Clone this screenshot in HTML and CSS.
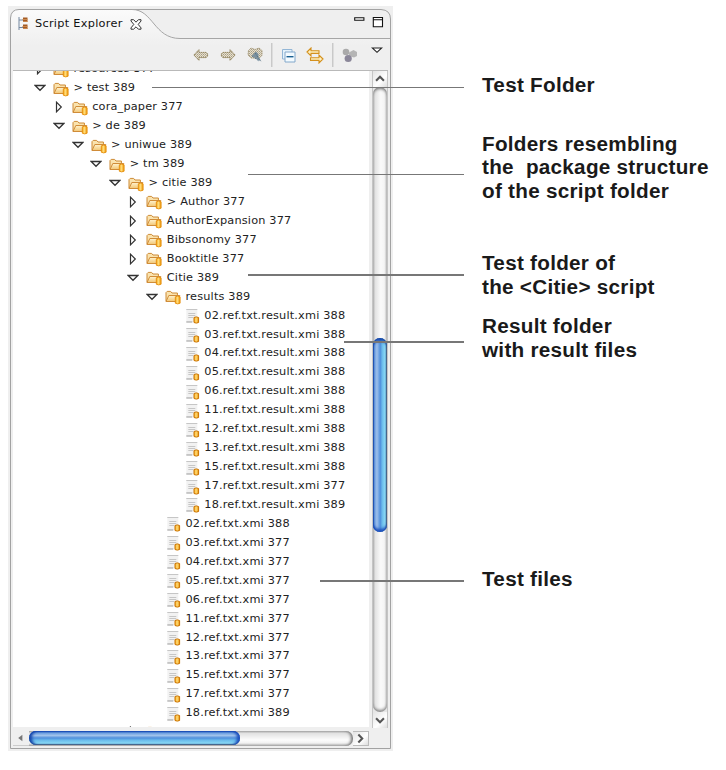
FILE: index.html
```html
<!DOCTYPE html>
<html lang="en">
<head>
<meta charset="utf-8">
<title>Script Explorer</title>
<link rel="stylesheet" href="styles.css">
</head>
<body>
<svg width="0" height="0" class="defs">
  <defs>
    <linearGradient id="fold" x1="0" y1="0" x2="0" y2="1"><stop offset="0" stop-color="#fff3cf"/><stop offset="1" stop-color="#f2c674"/></linearGradient>
    <linearGradient id="can" x1="0" y1="0" x2="1" y2="0"><stop offset="0" stop-color="#f6a81c"/><stop offset=".45" stop-color="#ffdc78"/><stop offset="1" stop-color="#ed9508"/></linearGradient>
    <linearGradient id="tabfill" x1="0" y1="0" x2="0" y2="1"><stop offset="0" stop-color="#fbfbfb"/><stop offset=".6" stop-color="#efefef"/></linearGradient>
    <pattern id="dots" width="2" height="2" patternUnits="userSpaceOnUse"><rect width="2" height="2" fill="#e6e0d0"/><rect width="1" height="1" fill="#a99e84"/><rect x="1" y="1" width="1" height="1" fill="#bdb49c"/></pattern>
  </defs>
  <symbol id="folder" viewBox="0 0 16 16">
    <path d="M1 12.300V3.600L2.200 2.400H5.600L7 4h5.400v2.600" fill="#fae3ae" stroke="#cd8a35"/>
    <path d="M1 12.500 3.800 6.500H14.800L12.300 12.500Z" fill="url(#fold)" stroke="#d08c38"/>
    <path d="M10.300 7.800q2.400-1.200 4.800 0v6.400q-2.400 1.400-4.800 0Z" fill="url(#can)" stroke="#e58e0c" stroke-width=".9"/>
  </symbol>
  <symbol id="file" viewBox="0 0 16 16">
    <path d="M1 1h11v13H1z" fill="#f2f2f2"/>
    <path d="M1 1.500h11M3 5.500h7M3 7.500h7M3 9.500h5" stroke="#c6c6c6" fill="none"/>
    <path d="M1 14h6" stroke="#999"/>
    <path d="M8.700 9.500q2.200-1.200 4.600 0v5q-2.300 1.200-4.600 0Z" fill="url(#can)" stroke="#c97300"/>
  </symbol>
  <symbol id="open" viewBox="0 0 12 12"><path d="M1.200 3.500H10.800L6 8.300Z" fill="#fff" stroke="#333" stroke-width="1.300"/></symbol>
  <symbol id="shut" viewBox="0 0 12 12"><path d="M3.500 1.200V10.800L8.300 6Z" fill="#fff" stroke="#333" stroke-width="1.200"/></symbol>
  <symbol id="arrow" viewBox="0 0 16 14"><path d="M.9 7 6 1.600V4.400h7l1.600 1.300v2.600L13 9.600H6v2.800Z" fill="url(#dots)" stroke="#93855f" stroke-dasharray="1.600 .4"/></symbol>
</svg>

<main class="figure">
  <section class="window">
    <header class="head">
      <svg class="frame" width="385" height="745" viewBox="8 6 385 745">
        <path d="M10.500 70V18Q11 9.500 19 9.500H132C153 9.500 154 38.500 180 38.500H390V70Z" fill="url(#tabfill)"/>
        <path d="M132 9.500H381Q390 10 390 19V38.500H180C154 38.500 153 9.500 132 9.500Z" fill="#efefef"/>
        <path d="M10.500 748.500V18Q11 9.500 19 9.500H381Q390.500 10 390.500 19V748.500Z" fill="none" stroke="#a2a2a2"/>
        <path d="M132 9.500C153 9.500 154 38.500 180 38.500H390" fill="none" stroke="#a6a6a6"/>
      </svg>
      <div class="tabbar">
        <svg width="11" height="14" viewBox="0 0 11 14"><path d="M1 0v13M1 3h4M1 10.500h4" stroke="#7488a0" fill="none"/><path d="M5 .5h4.500v4.500H5zM5 7.500h4.500v4.500H5z" fill="#a55b23"/><path d="M4 2.500h6M4 9.500h6M5 4.500h5M5 11.500h5" stroke="#d99c63" stroke-width=".7"/></svg>
        <span class="title">Script Explorer</span>
        <svg class="close" width="12" height="11" viewBox="0 0 12 11"><path d="M1 .7H3.600L6 3.200 8.400 .7H11V2L8.200 5.400 11 8.900v1.300H8.400L6 7.800 3.600 10.200H1V8.900L3.800 5.400 1 2Z" fill="#fff" stroke="#333"/></svg>
        <svg class="winbtns" width="30" height="14" viewBox="0 0 30 14"><path d="M.7 1.700h9.200v2.600H.7z" fill="#fff" stroke="#111" stroke-width="1.100"/><path d="M19.300 1.500h9.200v9.200H19.300zM19.300 3.800h9.200" fill="#fff" stroke="#111" stroke-width="1.100"/></svg>
      </div>
      <div class="toolbar">
        <svg class="t-back" width="16" height="14"><use href="#arrow"/></svg>
        <svg class="t-next" width="16" height="14"><use href="#arrow"/></svg>
        <svg class="t-up" width="16" height="16" viewBox="0 0 16 16"><path d="M1.500 3.500 4 1l4 1.500L12 1l3 2.500v5L12 11H4L1 8Z" fill="url(#dots)" stroke="#a69a7c" stroke-dasharray="1.400 .6"/><path d="M4.500 9 9 4.500 11.500 7v3l3 4.500L10 12.500 7 10Z" fill="#7d919e"/><path d="M5 9l7 5M8 6l5 7" stroke="#456b82" stroke-dasharray="1 1"/></svg>
        <i class="sep"></i>
        <svg class="t-collapse" width="15" height="15" viewBox="0 0 15 15"><path d="M1.500 1.500h9.500v9.500H1.500z" fill="#e5f2fb" stroke="#93b6d6"/><path d="M4 4h10v10H4z" fill="#f4fbff" stroke="#83a8cb"/><path d="M5.500 8.700h7" stroke="#195f91" stroke-width="1.400"/></svg>
        <svg class="t-link" width="18" height="17" viewBox="0 0 18 17"><path d="M1 5 5 1V3.700H13V6.400H5V9Z" fill="#fff1bf" stroke="#d4901c" stroke-width="1.100"/><path d="M17 12 13 8v2.700H4.500v2.700H13V16Z" fill="#fff1bf" stroke="#d4901c" stroke-width="1.100"/></svg>
        <i class="sep"></i>
        <svg class="t-task" width="16" height="15" viewBox="0 0 16 15"><circle cx="4" cy="4" r="3.300" fill="#aaa"/><path d="M7 4.500 11.500 2 15 4v4l-3 1.500L7 8Z" fill="#b5b5b5"/><circle cx="6.200" cy="10.500" r="3.600" fill="#8b8799"/></svg>
        <svg class="t-menu" width="12" height="7" viewBox="0 0 12 7"><path d="M1.300 1H10.700L6 5.300Z" fill="#fff" stroke="#222" stroke-width="1.100"/></svg>
      </div>
    </header>
    <div class="body">
      <div class="tree">
        <div class="row l0"><svg><use href="#shut"/></svg><svg class="ic"><use href="#folder"/></svg>resources 377</div>
        <div class="row l0"><svg><use href="#open"/></svg><svg class="ic"><use href="#folder"/></svg>&gt; test 389</div>
        <div class="row l1"><svg><use href="#shut"/></svg><svg class="ic"><use href="#folder"/></svg>cora_paper 377</div>
        <div class="row l1"><svg><use href="#open"/></svg><svg class="ic"><use href="#folder"/></svg>&gt; de 389</div>
        <div class="row l2"><svg><use href="#open"/></svg><svg class="ic"><use href="#folder"/></svg>&gt; uniwue 389</div>
        <div class="row l3"><svg><use href="#open"/></svg><svg class="ic"><use href="#folder"/></svg>&gt; tm 389</div>
        <div class="row l4"><svg><use href="#open"/></svg><svg class="ic"><use href="#folder"/></svg>&gt; citie 389</div>
        <div class="row l5"><svg><use href="#shut"/></svg><svg class="ic"><use href="#folder"/></svg>&gt; Author 377</div>
        <div class="row l5"><svg><use href="#shut"/></svg><svg class="ic"><use href="#folder"/></svg>AuthorExpansion 377</div>
        <div class="row l5"><svg><use href="#shut"/></svg><svg class="ic"><use href="#folder"/></svg>Bibsonomy 377</div>
        <div class="row l5"><svg><use href="#shut"/></svg><svg class="ic"><use href="#folder"/></svg>Booktitle 377</div>
        <div class="row l5"><svg><use href="#open"/></svg><svg class="ic"><use href="#folder"/></svg>Citie 389</div>
        <div class="row l6"><svg><use href="#open"/></svg><svg class="ic"><use href="#folder"/></svg>results 389</div>
        <div class="row l7"><svg></svg><svg class="ic"><use href="#file"/></svg>02.ref.txt.result.xmi 388</div>
        <div class="row l7"><svg></svg><svg class="ic"><use href="#file"/></svg>03.ref.txt.result.xmi 388</div>
        <div class="row l7"><svg></svg><svg class="ic"><use href="#file"/></svg>04.ref.txt.result.xmi 388</div>
        <div class="row l7"><svg></svg><svg class="ic"><use href="#file"/></svg>05.ref.txt.result.xmi 388</div>
        <div class="row l7"><svg></svg><svg class="ic"><use href="#file"/></svg>06.ref.txt.result.xmi 388</div>
        <div class="row l7"><svg></svg><svg class="ic"><use href="#file"/></svg>11.ref.txt.result.xmi 388</div>
        <div class="row l7"><svg></svg><svg class="ic"><use href="#file"/></svg>12.ref.txt.result.xmi 388</div>
        <div class="row l7"><svg></svg><svg class="ic"><use href="#file"/></svg>13.ref.txt.result.xmi 388</div>
        <div class="row l7"><svg></svg><svg class="ic"><use href="#file"/></svg>15.ref.txt.result.xmi 388</div>
        <div class="row l7"><svg></svg><svg class="ic"><use href="#file"/></svg>17.ref.txt.result.xmi 377</div>
        <div class="row l7"><svg></svg><svg class="ic"><use href="#file"/></svg>18.ref.txt.result.xmi 389</div>
        <div class="row l6"><svg></svg><svg class="ic"><use href="#file"/></svg>02.ref.txt.xmi 388</div>
        <div class="row l6"><svg></svg><svg class="ic"><use href="#file"/></svg>03.ref.txt.xmi 377</div>
        <div class="row l6"><svg></svg><svg class="ic"><use href="#file"/></svg>04.ref.txt.xmi 377</div>
        <div class="row l6"><svg></svg><svg class="ic"><use href="#file"/></svg>05.ref.txt.xmi 377</div>
        <div class="row l6"><svg></svg><svg class="ic"><use href="#file"/></svg>06.ref.txt.xmi 377</div>
        <div class="row l6"><svg></svg><svg class="ic"><use href="#file"/></svg>11.ref.txt.xmi 377</div>
        <div class="row l6"><svg></svg><svg class="ic"><use href="#file"/></svg>12.ref.txt.xmi 377</div>
        <div class="row l6"><svg></svg><svg class="ic"><use href="#file"/></svg>13.ref.txt.xmi 377</div>
        <div class="row l6"><svg></svg><svg class="ic"><use href="#file"/></svg>15.ref.txt.xmi 377</div>
        <div class="row l6"><svg></svg><svg class="ic"><use href="#file"/></svg>17.ref.txt.xmi 377</div>
        <div class="row l6"><svg></svg><svg class="ic"><use href="#file"/></svg>18.ref.txt.xmi 389</div>
        <div class="row l5"><svg><use href="#shut"/></svg><svg class="ic"><use href="#folder"/></svg></div>
      </div>
      <div class="vbar">
        <svg class="btn" width="16" height="16" viewBox="0 0 16 16"><path d="M3.500 10 8 5.500 12.500 10" fill="none" stroke="#555" stroke-width="2.400"/></svg>
        <div class="vtrack"><div class="vthumb"></div></div>
        <svg class="btn" width="16" height="16" viewBox="0 0 16 16"><path d="M3.500 6 8 10.500 12.500 6" fill="none" stroke="#555" stroke-width="2.400"/></svg>
      </div>
    </div>
    <div class="hbar">
      <svg class="left" width="16" height="15" viewBox="0 0 16 15"><path d="M9.500 4v7L5 7.500Z" fill="#777"/></svg>
      <div class="htrack"><div class="hthumb"></div></div>
      <svg class="right" width="16" height="15" viewBox="0 0 16 15"><path d="M5.500 3 10 7.500 5.500 12" fill="none" stroke="#555" stroke-width="2.400"/></svg>
    </div>
  </section>

  <aside class="notes">
    <p class="note n1">Test Folder</p>
    <p class="note n2">Folders resembling
the  package structure
of the script folder</p>
    <p class="note n3">Test folder of
the &lt;Citie&gt; script</p>
    <p class="note n4">Result folder
with result files</p>
    <p class="note n5">Test files</p>
  </aside>
</main>
</body>
</html>
```
FILE: styles.css
```css
* { box-sizing: border-box; }
body { margin: 0; background: #fff; overflow: hidden; }
.defs { position: absolute; }
svg { display: block; flex: none; }
.figure { display: flex; width: 726px; height: 770px; padding: 6px 0 0 8px; }

.window {
  position: relative; flex: none; width: 385px; height: 745px;
  background: #efefef; color: #222;
  font: 11.300px/14px "DejaVu Sans", sans-serif; letter-spacing: .17px;
}
.frame { position: absolute; left: 0; top: 0; }
.head { height: 65px; }
.tabbar { position: relative; display: flex; height: 33px; padding: 11px 0 0 10px; }
.title { width: 95px; margin-left: 6px; letter-spacing: .28px; white-space: nowrap; color: #111; }
.close { margin-top: 2px; }
.winbtns { margin: -1px 0 0 212px; }
.toolbar { position: relative; display: flex; height: 32px; border-bottom: 1px solid #b9b9b9; margin: 0 5px; }
.t-back { margin: 9px 0 0 180px; }
.t-next { margin: 9px 0 0 11px; transform: scaleX(-1); }
.t-up { margin: 8px 0 0 11px; }
.sep { width: 2px; height: 24px; margin: 4px 0 0 8px; background: #c9c9c9; border-right: 1px solid #ddd; }
.t-collapse { margin: 9px 0 0 8px; }
.t-link { margin: 8px 0 0 10px; }
.t-task { margin: 9px 0 0 8px; }
.t-menu { margin: 8px 0 0 13px; }

.body { position: relative; display: flex; height: 657px; margin-left: 5px; }
.tree { width: 356px; height: 656px; background: #fff; overflow: hidden; }
.row { display: flex; align-items: center; height: 18.940px; white-space: pre; }
.row:first-child { margin-top: -11.100px; }
.row svg { width: 12px; height: 12px; margin-right: 7px; }
.row .ic { width: 16px; height: 16px; margin: 1px 4.500px 0 0; }
.l0 { padding-left: 21px; }
.l1 { padding-left: 39.700px; }
.l2 { padding-left: 58.500px; }
.l3 { padding-left: 77.200px; }
.l4 { padding-left: 96px; }
.l5 { padding-left: 114.300px; }
.l6 { padding-left: 133px; }
.l7 { padding-left: 151.800px; }
.row svg:empty + .ic { transform: translateX(1.300px); }

.vbar { width: 16px; height: 657px; margin-left: 3px; border: 1px solid #c5c5c5; border-top: 0; background: #e6e6e6; }
.btn { width: 14px; background: linear-gradient(135deg, #e3e3e3, #fff 60%, #ddd); }
.vtrack {
  height: 625px; margin: 0; padding-top: 251px; border-radius: 7px;
  background: linear-gradient(90deg, #c4c4c4, #e4e4e4 18%, #fafafa 55%, #f5f5f5 80%, #ccc);
  box-shadow: inset 0 3px 3px -1px #777, inset 0 -3px 3px -1px #888;
}
.vthumb {
  height: 194px; border-radius: 7px;
  background: linear-gradient(90deg, #2456b3, #6d9fe0 12%, #9dbfeb 28%, #4f8fdc 52%, #6bbcec 66%, #87d8f4 85%, #5a8aab);
  box-shadow: inset 0 4px 3px -1px #1648ad, inset 0 -4px 3px -1px #1d50bd, inset 1px 0 0 #2456b3, inset -1px 0 0 #56707f;
}
.hbar { position: relative; display: flex; width: 356px; height: 15px; margin: 3px 0 0 5px; border-right: 1px solid #bbb; }
.left { border-bottom: 1px solid #ccc; }
.htrack {
  width: 324px; height: 15px; border-radius: 0 7px 7px 0;
  background: linear-gradient(#aaa, #e1e1e1 15%, #fcfcfc 60%, #f2f2f2 80%, #aaa);
  box-shadow: inset -3px 0 3px -1px #777;
}
.hthumb {
  width: 211px; height: 14px; border-radius: 7px;
  background: linear-gradient(#1d50b9, #6d9fe0 15%, #a0c2eb 32%, #4f8fdc 50%, #6bbcec 66%, #87d8f4 88%, #5a7d9a);
  box-shadow: inset 4px 0 3px -1px #1648ad, inset -4px 0 3px -1px #1d50bd, inset 0 1px 0 #1d50b9, inset 0 -1px 0 #56707f;
}
.right { width: 15px; background: linear-gradient(135deg, #e3e3e3, #fff 60%, #ddd); border-bottom: 1px solid #bbb; border-top: 1px solid #bbb; }

.notes { width: 240px; margin-left: 89px; padding-top: 67px; }
.note {
  position: relative; margin: 0; white-space: pre; color: #1a1a1a;
  font: bold 20.700px/23.500px "Liberation Sans", sans-serif; letter-spacing: .27px;
}
.note::before { content: ""; position: absolute; right: calc(100% + 18px); height: 1.500px; background: #777; }
.n1::before { top: 13.500px; width: 312px; }
.n2::before { top: 42px; width: 216px; }
.n3::before { top: 23px; width: 216px; }
.n4::before { top: 27px; width: 120px; }
.n5::before { top: 13px; width: 144px; }
.n2 { margin-top: 35px; }
.n3 { margin-top: 49px; }
.n4 { margin-top: 16px; }
.n5 { margin-top: 206px; }
```
